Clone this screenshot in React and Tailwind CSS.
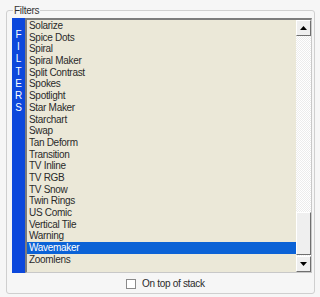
import React from "react";

const filters = [
  "Solarize",
  "Spice Dots",
  "Spiral",
  "Spiral Maker",
  "Split Contrast",
  "Spokes",
  "Spotlight",
  "Star Maker",
  "Starchart",
  "Swap",
  "Tan Deform",
  "Transition",
  "TV Inline",
  "TV RGB",
  "TV Snow",
  "Twin Rings",
  "US Comic",
  "Vertical Tile",
  "Warning",
  "Wavemaker",
  "Zoomlens",
];

// small XP-style scroll button
const ScrollButton = ({ up }) => (
  <div className="h-[16px] w-full flex items-center justify-center bg-[#efefef] border-t border-l border-t-white border-l-white border-r border-b border-r-[#6f6f6f] border-b-[#6f6f6f]">
    <svg width="7" height="4" viewBox="0 0 7 4">
      {up ? <path d="M0 4 L3.5 0 L7 4 Z" fill="#000" /> : <path d="M0 0 L3.5 4 L7 0 Z" fill="#000" />}
    </svg>
  </div>
);

const App = () => {
  return (
    <div
      className="w-[320px] h-[297px] bg-[#f6f6f6] pt-[4px] pl-[6px] pr-[5px] overflow-hidden"
      style={{ fontFamily: '"Liberation Sans", Arial, sans-serif' }}
    >
      <fieldset className="border border-[#cfcfcf] rounded-[3px] h-[290px] pl-[5px] pr-[2px] pt-px m-0 min-w-0">
        <legend className="ml-[1px] px-[1px] text-[10px] tracking-[-0.3px] leading-[13px] text-[#333]">Filters</legend>

        <div className="flex h-[255px]">
          {/* vertical FILTERS tab */}
          <div className="w-[13px] bg-[#0c48dc] flex flex-col items-center pt-[11px] text-white text-[10px] leading-[12.2px]">
            {"FILTERS".split("").map((c, i) => (
              <span key={i}>{c}</span>
            ))}
          </div>

          {/* list box */}
          <div className="flex-1 flex border-t-2 border-l-2 border-t-[#7c7c7c] border-l-[#7c7c7c] border-b border-r border-b-[#c8c8c8] border-r-[#c8c8c8] bg-[#ebe8d8]">
            <div className="flex-1 flex flex-col">
              {filters.map((f) => (
                <div
                  key={f}
                  className={
                    "h-[11.7px] leading-[11.7px] pl-[2px] text-[10px] tracking-[-0.3px] whitespace-nowrap " +
                    (f === "Wavemaker" ? "bg-[#0b62d6] text-white" : "text-[#2a2a2a]")
                  }
                >
                  {f}
                </div>
              ))}
            </div>

            {/* scrollbar */}
            <div className="w-[15px] flex flex-col">
              <ScrollButton up />
              <div className="flex-1 flex flex-col bg-[repeating-conic-gradient(#ffffff_0_25%,#ececec_0_50%)] bg-[length:2px_2px]">
                <div className="flex-1" />
                <div className="h-[43px] bg-[#efefef] border-t border-l border-t-white border-l-white border-r border-b border-r-[#6f6f6f] border-b-[#6f6f6f]" />
                <div className="h-[1px]" />
              </div>
              <ScrollButton />
            </div>
          </div>
        </div>

        {/* checkbox row */}
        <div className="flex items-center ml-[114px] mt-[5px]">
          <div className="w-[10px] h-[10px] bg-white border border-[#8a8a8a]" />
          <span className="ml-[6px] text-[10px] tracking-[-0.3px] leading-[12px] text-[#2a2a2a]">On top of stack</span>
        </div>
      </fieldset>
    </div>
  );
};

export default App;
